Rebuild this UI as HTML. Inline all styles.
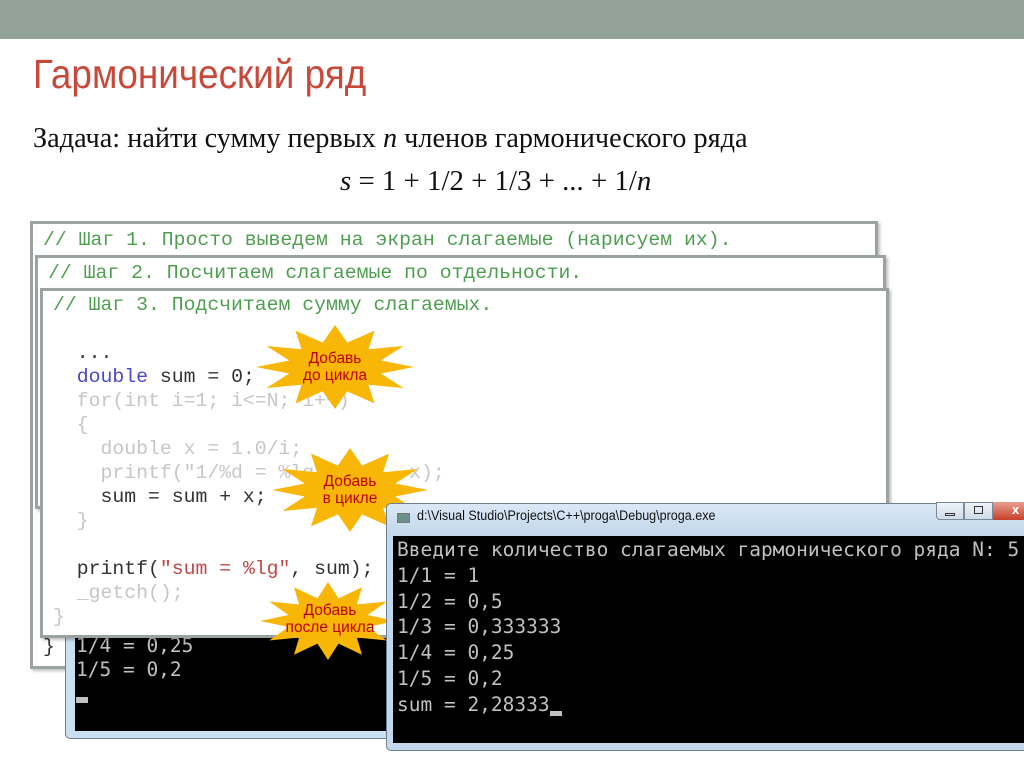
<!DOCTYPE html>
<html><head><meta charset="utf-8"><style>
*{margin:0;padding:0;box-sizing:border-box}
body{width:1024px;height:767px;overflow:hidden;background:#fff;position:relative;font-family:"Liberation Sans",sans-serif}
.abs{position:absolute}
.top{left:0;top:0;width:1024px;height:39px;background:#94a39a}
.title{left:33px;top:51px;font-size:41px;color:#c8483a;transform:scaleX(.9);transform-origin:left top;white-space:nowrap}
.task{left:33px;top:123px;font-family:"Liberation Serif",serif;font-size:28px;color:#111;transform:scaleX(1.01);transform-origin:left top;white-space:nowrap}
.formula{left:340px;top:166px;font-family:"Liberation Serif",serif;font-size:28px;color:#111;transform:scaleX(1.03);transform-origin:left top;white-space:nowrap}
.box{background:#fff;border:3px solid #9aa39e;box-shadow:2px 2px 3px rgba(0,0,0,.25)}
.code{font-family:"Liberation Mono",monospace;font-size:19.8px;line-height:24px;white-space:pre;color:#333}
.cm{color:#4e9e50}
.f{color:#c6c6c6}
.kw{color:#4848c8}
.st{color:#c04848}
.con{background:#c9dff2;border:1px solid #6d7f90;border-radius:5px}
.blk{background:#000;color:#c0c0c0;font-family:"DejaVu Sans Mono","Liberation Mono",monospace;font-size:19.5px;white-space:pre}
.star{position:absolute}
.star span{position:absolute;left:0;width:100%;text-align:center;color:#c00000;font-size:15.5px;line-height:17px}
</style></head><body>
<div class="abs top"></div>
<div class="abs title">Гармонический ряд</div>
<div class="abs task">Задача: найти сумму первых <i>n</i> членов гармонического ряда</div>
<div class="abs formula"><i>s</i> = 1 + 1/2 + 1/3 + ... + 1/<i>n</i></div>

<div class="abs box" style="left:30px;top:221px;width:848px;height:448px"></div>
<div class="abs code cm" style="left:43px;top:228px">// Шаг 1. Просто выведем на экран слагаемые (нарисуем их).</div>
<div class="abs code" style="left:43px;top:635px">}</div>
<div class="abs box" style="left:35px;top:255px;width:851px;height:254px"></div>
<div class="abs code cm" style="left:48px;top:261px">// Шаг 2. Посчитаем слагаемые по отдельности.</div>

<div class="abs con" style="left:65px;top:600px;width:340px;height:139px"></div>
<div class="abs blk" style="left:75px;top:610px;width:330px;height:121px;line-height:24px;padding-left:1px">1/3 = 0,333333
1/4 = 0,25
1/5 = 0,2</div>
<div class="abs" style="left:76px;top:697px;width:12px;height:6px;background:#c0c0c0"></div>

<div class="abs box" style="left:40px;top:288px;width:849px;height:350px"></div>
<div class="abs code" style="left:53px;top:293px"><span class="cm">// Шаг 3. Подсчитаем сумму слагаемых.</span>

  ...
  <span class="kw">double</span> sum = 0;
<span class="f">  for(int i=1; i&lt;=N; i++)
  {
    double x = 1.0/i;
    printf("1/%d = %lg\n", i, x);</span>
    sum = sum + x;
<span class="f">  }</span>

  printf(<span class="st">"sum = %lg"</span>, sum);
<span class="f">  _getch();
}</span></div>

<svg class="star" style="left:256px;top:325px" width="158" height="84" viewBox="-1 -1 2 2" preserveAspectRatio="none"><polygon fill="#f8b606" points="1,0 .58,.155 .866,.5 .424,.424 .5,.866 .155,.58 0,1 -.155,.58 -.5,.866 -.424,.424 -.866,.5 -.58,.155 -1,0 -.58,-.155 -.866,-.5 -.424,-.424 -.5,-.866 -.155,-.58 0,-1 .155,-.58 .5,-.866 .424,-.424 .866,-.5 .58,-.155"/></svg>
<div class="star" style="left:275px;top:350px;width:120px;height:34px"><span>Добавь<br>до цикла</span></div>
<svg class="star" style="left:272px;top:448px" width="156" height="84" viewBox="-1 -1 2 2" preserveAspectRatio="none"><polygon fill="#f8b606" points="1,0 .58,.155 .866,.5 .424,.424 .5,.866 .155,.58 0,1 -.155,.58 -.5,.866 -.424,.424 -.866,.5 -.58,.155 -1,0 -.58,-.155 -.866,-.5 -.424,-.424 -.5,-.866 -.155,-.58 0,-1 .155,-.58 .5,-.866 .424,-.424 .866,-.5 .58,-.155"/></svg>
<div class="star" style="left:290px;top:473px;width:120px;height:34px"><span>Добавь<br>в цикле</span></div>
<svg class="star" style="left:260px;top:582px" width="136" height="78" viewBox="-1 -1 2 2" preserveAspectRatio="none"><polygon fill="#f8b606" points="1,0 .58,.155 .866,.5 .424,.424 .5,.866 .155,.58 0,1 -.155,.58 -.5,.866 -.424,.424 -.866,.5 -.58,.155 -1,0 -.58,-.155 -.866,-.5 -.424,-.424 -.5,-.866 -.155,-.58 0,-1 .155,-.58 .5,-.866 .424,-.424 .866,-.5 .58,-.155"/></svg>
<div class="star" style="left:268px;top:602px;width:124px;height:34px"><span>Добавь<br>после цикла</span></div>

<div class="abs con" style="left:386px;top:503px;width:650px;height:248px;background:linear-gradient(#dbe9f6,#c3d8ec 30px)"></div>
<div class="abs" style="left:397px;top:513px;width:13px;height:10px;background:#6b8f8a;border:1px solid #777"></div>
<div class="abs" style="left:417px;top:508px;font-size:13.5px;color:#111;white-space:nowrap;transform:scaleX(.93);transform-origin:left top">d:\Visual Studio\Projects\C++\proga\Debug\proga.exe</div>
<div class="abs" style="left:936px;top:502px;width:28px;height:18px;border:1px solid #7a8a9a;border-radius:0 0 0 4px;background:linear-gradient(#eef3f8,#cfdbe8)"></div>
<div class="abs" style="left:945px;top:513px;width:10px;height:3px;border:1px solid #333"></div>
<div class="abs" style="left:964px;top:502px;width:29px;height:18px;border:1px solid #7a8a9a;background:linear-gradient(#eef3f8,#cfdbe8)"></div>
<div class="abs" style="left:974px;top:506px;width:9px;height:8px;border:1px solid #333"></div>
<div class="abs" style="left:993px;top:502px;width:31px;height:18px;background:linear-gradient(#e8a090,#c5402a)"></div>
<div class="abs" style="left:1012px;top:502px;color:#fff;font-size:13px;font-weight:bold">x</div>
<div class="abs blk" style="left:393px;top:536px;width:631px;height:207px;line-height:25.8px;padding-left:4px;padding-top:1px">Введите количество слагаемых гармонического ряда N: 5
1/1 = 1
1/2 = 0,5
1/3 = 0,333333
1/4 = 0,25
1/5 = 0,2
sum = 2,28333</div>
<div class="abs" style="left:550px;top:711px;width:12px;height:5px;background:#c0c0c0"></div>
</body></html>
